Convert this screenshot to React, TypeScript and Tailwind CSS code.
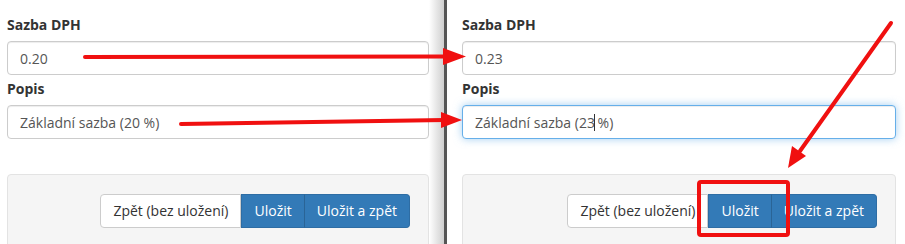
import React from "react";

function Field({ label, value, focus, caret, mt }: { label: string; value: React.ReactNode; focus?: boolean; caret?: boolean; mt: string }) {
  return (
    <div className={mt}>
      <div className="text-[14px] leading-[20px] font-bold text-[#333] mb-[6px]">{label}</div>
      <div
        className={
          "h-[34px] rounded-[4px] border px-[12px] flex items-center text-[14px] text-[#555] bg-white " +
          (focus
            ? "border-[#66afe9] shadow-[inset_0_1px_1px_rgba(0,0,0,0.075),0_0_8px_rgba(102,175,233,0.6)]"
            : "border-[#ccc] shadow-[inset_0_1px_1px_rgba(0,0,0,0.075)]")
        }
      >
        {value}
      </div>
    </div>
  );
}

function Footer() {
  return (
    <div className="mt-[35px] rounded-[4px] border border-[#e3e3e3] bg-[#f5f5f5] pt-[19px] pb-[19px] pr-[18px] flex justify-end">
      <div className="flex text-[14px] leading-[20px]">
        <div className="h-[34px] px-[12px] flex items-center border border-[#ccc] bg-white text-[#333] rounded-l-[4px] whitespace-nowrap">
          Zpět (bez uložení)
        </div>
        <div className="h-[34px] px-[12px] flex items-center border border-[#2e6da4] bg-[#337ab7] text-white whitespace-nowrap">
          Uložit
        </div>
        <div className="h-[34px] px-[12px] flex items-center border border-[#2e6da4] border-l-[#2a6496] -ml-px bg-[#337ab7] text-white rounded-r-[4px] whitespace-nowrap">
          Uložit a zpět
        </div>
      </div>
    </div>
  );
}

export default function App() {
  return (
    <div
      className="relative w-[905px] h-[244px] overflow-hidden bg-white flex"
      style={{ fontFamily: '"Open Sans", "Noto Sans", sans-serif' }}
    >
      <div className="w-[444px] flex shrink-0">
        <div className="w-[422px] ml-[7px] pt-[15px]">
          <Field label="Sazba DPH" value="0.20" mt="" />
          <Field label="Popis" value="Základní sazba (20 %)" mt="mt-[4px]" />
          <Footer />
        </div>
        <div className="w-[15px] bg-gradient-to-r from-white to-[#cfcfcf]" />
      </div>
      <div className="w-[3px] shrink-0 bg-[#555]" />
      <div className="flex-1 pl-[15px] pr-[9px]">
        <div className="pt-[15px]">
          <Field label="Sazba DPH" value="0.23" mt="" />
          <Field
            label="Popis"
            focus
            value={
              <span className="whitespace-pre">
                Základní sazba (23<span className="inline-block w-px h-[17px] bg-[#333] align-middle -mx-px relative -top-px" /> %)
              </span>
            }
            mt="mt-[4px]"
          />
          <Footer />
        </div>
      </div>
      <svg className="absolute left-0 top-0 pointer-events-none" width="905" height="244" viewBox="0 0 905 244">
        <g stroke="#f01010" strokeWidth="4" strokeLinecap="round" fill="none">
          <line x1="85" y1="57" x2="446" y2="56.5" />
          <line x1="181" y1="124" x2="445" y2="120" />
          <line x1="891" y1="23" x2="800" y2="151" />
        </g>
        <g fill="#f01010">
          <polygon points="443,48 466,56.5 443,65" />
          <polygon points="441,112 462,120 441,128" />
          <polygon points="788,168 792,146 806,156" />
        </g>
        <rect x="699" y="182" width="89" height="53" rx="2" fill="none" stroke="#f01010" strokeWidth="4" />
      </svg>
    </div>
  );
}
